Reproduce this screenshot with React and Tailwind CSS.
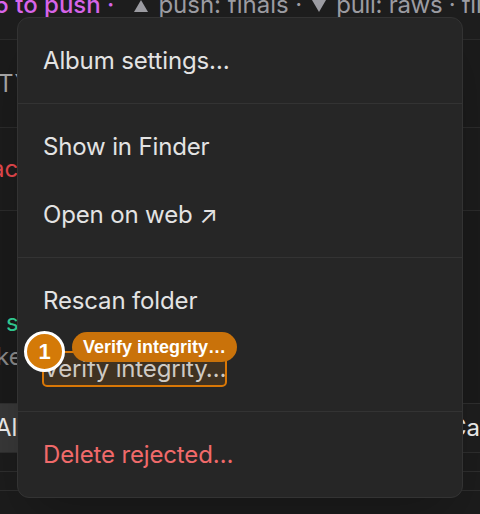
import React from "react";

const menuSections = [
  [{ label: "Album settings…" }],
  [{ label: "Show in Finder" }, { label: "Open on web ↗" }],
  [{ label: "Rescan folder" }, { label: "Verify integrity…", focused: true }],
  [{ label: "Delete rejected…", danger: true }],
];

const Tri = ({ down }) => (
  <svg width="14" height="12" viewBox="0 0 14 12" className="shrink-0 mr-[10px] mt-[2px]">
    <path d={down ? "M0 0H14L7 12Z" : "M7 0L14 12H0Z"} fill="#9d9da3" />
  </svg>
);

const App = () => {
  return (
    <div
      className="relative w-[480px] h-[514px] overflow-hidden bg-[#1c1c1c] text-[#e6e6e6]"
      style={{ fontFamily: "Inter, 'Noto Sans', sans-serif" }}
    >
      {/* background app */}
      <div className="flex flex-col h-full">
        <div className="h-[40px] bg-[#1e1e1e] border-b border-[#2b2b2b] flex items-start">
          <div className="flex items-center whitespace-nowrap text-[24px] leading-[28px] -mt-[9px] -ml-[6px] text-[#9d9da3]">
            <span className="text-[#d865ea] font-medium mr-[20px]">5 to push ·</span>
            <Tri />
            <span className="mr-[10px]">push: finals ·</span>
            <Tri down />
            <span className="tracking-[-0.3px]">pull: raws · files</span>
          </div>
        </div>
        <div className="h-[88px] border-b border-[#2b2b2b] bg-[#1b1b1b] flex items-center">
          <span className="text-[24px] text-[#a8a8a8] -ml-[2px] tracking-wide">TYPE</span>
        </div>
        <div className="h-[83px] border-b border-[#2b2b2b] bg-[#1c1c1c] flex items-center">
          <span className="text-[24px] text-[#e5484d] -ml-[9px]">ac</span>
        </div>
        <div className="h-[192px] bg-[#1a1a1a] flex flex-col pt-[98px]">
          <span className="text-[24px] leading-[28px] text-[#34d399] ml-[6px]">s</span>
          <span className="text-[24px] leading-[28px] text-[#8a8a8a] -ml-[4px] mt-[6px]">ke</span>
        </div>
        <div className="h-[49px] border-t border-[#2f2f2f] bg-[#1e1e1e] flex items-center whitespace-nowrap">
          <div className="h-full w-[17px] shrink-0 bg-[#383838] flex items-center overflow-hidden">
            <span className="text-[24px] text-[#f0f0f0] -ml-[5px]">All</span>
          </div>
          <span className="text-[24px] text-[#f0f0f0] ml-[432px]">Cancel</span>
        </div>
        <div className="h-[19px] border-t border-[#2e2e2e] bg-[#1c1c1c]"></div>
        <div className="h-[19px] border-t border-[#2e2e2e] bg-[#1c1c1c]"></div>
        <div className="flex-1 border-t border-[#2e2e2e] bg-[#1c1c1c]"></div>
      </div>

      {/* context menu */}
      <div className="absolute left-[17px] top-[17px] w-[446px] rounded-[12px] border border-[#333333] bg-[#262626] shadow-2xl">
        {menuSections.map((section, i) => (
          <div key={i} className={"pt-[9px] pb-2 " + (i > 0 ? "border-t border-[#333333]" : "")}>
            {section.map((item) => (
              <div key={item.label} className="h-[68px] flex items-center px-[25px]">
                <span
                  className={
                    "relative text-[24px] leading-[30px] tracking-[-0.15px] " +
                    (item.danger ? "text-[#f06a6a]" : "text-[#e3e3e3]")
                  }
                >
                  {item.focused && (
                    <span className="absolute -left-[1px] -right-[1px] -top-[3px] -bottom-[3px] rounded-[5px] border-2 border-[#d97706] bg-[#d97706]/15"></span>
                  )}
                  <span className={item.focused ? "relative text-[#cfcac4]" : ""}>{item.label}</span>
                </span>
              </div>
            ))}
          </div>
        ))}
      </div>

      {/* annotation */}
      <div
        className="absolute left-[72px] top-[332px] h-[30px] px-[11px] rounded-full bg-[#c9720a] flex items-center text-white font-bold text-[18px]"
        style={{ fontFamily: "'Liberation Sans', Arial, sans-serif" }}
      >
        Verify integrity…
      </div>
      <div
        className="absolute left-[24px] top-[331px] w-[41px] h-[41px] rounded-full bg-[#d47a08] border-[3px] border-white flex items-center justify-center text-white font-bold text-[22px]"
        style={{ fontFamily: "'Liberation Sans', Arial, sans-serif" }}
      >
        1
      </div>
    </div>
  );
};

export default App;
